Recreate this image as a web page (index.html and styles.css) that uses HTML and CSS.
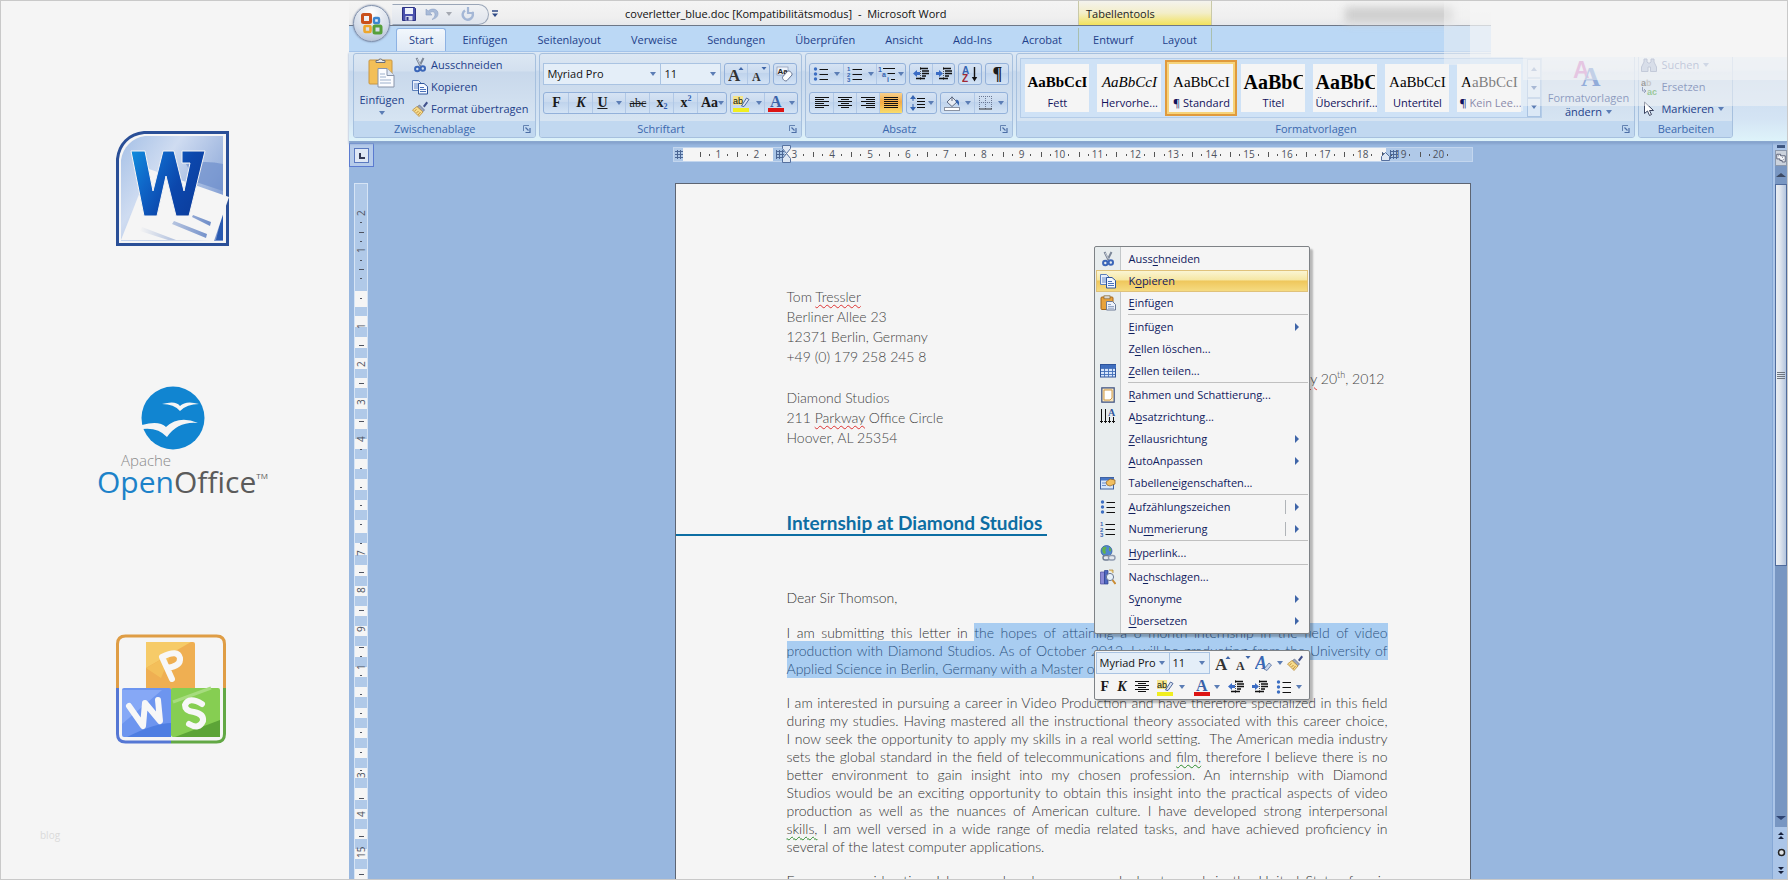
FILE: index.html
```html
<!DOCTYPE html>
<html lang="de">
<head>
<meta charset="utf-8">
<title>coverletter_blue.doc [Kompatibilitätsmodus] - Microsoft Word</title>
<link rel="stylesheet" href="styles.css">
</head>
<body>
<svg class="defs" width="0" height="0" aria-hidden="true">
  <defs>
    <symbol id="i-cut" viewBox="0 0 16 16"><path d="M4.500 1 8.500 9M11.500 1 7.500 9" stroke="#7c8798" stroke-width="2" fill="none"/><path d="M5.200 2 8.500 8" stroke="#dfe5ee" stroke-width=".7"/><circle cx="5.300" cy="12" r="2.200" fill="none" stroke="#3b66b8" stroke-width="2"/><circle cx="10.800" cy="11.500" r="2.200" fill="none" stroke="#3b66b8" stroke-width="2"/></symbol>
    <symbol id="i-copy" viewBox="0 0 16 16"><path d="M.5 1.500h6l3 3v7h-9z" fill="#e8effb" stroke="#5d80bb"/><path d="M2 5h5M2 7h4M2 9h4" stroke="#6a8cc8"/><path d="M6.500 4.500h5.500l3.500 3v7.500h-9z" fill="#f4f8ff" stroke="#2f569c"/><path d="M8 8.500h4M8 10.500h6M8 12.500h6" stroke="#4a72ba"/></symbol>
    <symbol id="i-brush" viewBox="0 0 16 16"><path d="M11 5l3.500-4.500 1.500 1.500-3.500 4.500z" fill="#40518c"/><path d="M7.500 4l5 5-2 2-5.500-5z" fill="#9aa4bb" stroke="#626c86" stroke-width=".7"/><path d="M5 5.500l6 5.500-4 4.500L.5 9z" fill="#f7dc8c" stroke="#b98e3c" stroke-width=".8"/><path d="M2.500 10l2-1.500M4.500 12l2-2M6 14l2.500-3" stroke="#b07b2c" stroke-width=".8"/></symbol>
    <symbol id="i-paste-lg" viewBox="0 0 28 32"><rect x="1" y="3" width="23" height="24" rx="1" fill="#f3bf57" stroke="#c99642"/><path d="M8 5.500h9v-2h-2.500a2.200 2.200 0 0 0-4.200 0H8z" fill="#e6e9ee" stroke="#6b6f78"/><path d="M10 11.500h9l7 7V30H10z" fill="#fbfcff" stroke="#8894aa"/><path d="M19 11.500v7h7" fill="#dfe7f4" stroke="#8894aa"/><path d="M12 17h5M12 20h6M12 23h11M12 26h11" stroke="#9db0cc"/></symbol>
    <symbol id="i-paste" viewBox="0 0 16 16"><rect x="1" y="2" width="12" height="12.500" rx="1" fill="#e8a33c" stroke="#a4661c"/><rect x="4" y=".8" width="6" height="3" fill="#d8d8d8" stroke="#8a6a30" stroke-width=".7"/><path d="M6.500 6.500h6l3 3v5.500h-9z" fill="#edf2fb" stroke="#6a7a96"/><path d="M8 9.500h3M8 11.500h6M8 13.200h6" stroke="#7a90b8" stroke-width=".8"/></symbol>
    <symbol id="i-save" viewBox="0 0 14 14"><path d="M.5.5h12l1 1v12H.5z" fill="#4a51ad" stroke="#2c3283"/><rect x="3" y="1" width="8" height="6" fill="#eef2fb"/><rect x="3.500" y="9" width="7" height="4.500" fill="#d7dcec"/><rect x="4.500" y="10" width="2" height="3.500" fill="#2c3283"/></symbol>
    <symbol id="i-undo" viewBox="0 0 14 14"><path d="M1 2v6h6L4.800 5.800C7 4 10 4.500 10 7.500c0 2-1 3.500-3 5 4-1 6-3 6-6C13 2 7 .5 3.200 4z" fill="#a9bbd8" stroke="#8ba0c4" stroke-width=".6"/></symbol>
    <symbol id="i-redo" viewBox="0 0 14 14"><path d="M4 3.500A5 5 0 1 0 11 5" fill="none" stroke="#a4b7d6" stroke-width="2.600"/><path d="M7 0v6h6" fill="none" stroke="#a4b7d6" stroke-width="2.200"/></symbol>
    <symbol id="i-clear" viewBox="0 0 18 18"><rect x="1" y="2" width="11" height="8" fill="#eef3fb" stroke="#7d8ba8" stroke-width=".6"/><text x="1.500" y="9" font-size="8" font-family="Liberation Sans" font-weight="700" fill="#222">Aa</text><path d="M6.500 12l5-5.500c1.500-1.500 5 1 4.500 3.500l-5 5.500c-2 1.500-5-1.500-4.500-3.500z" fill="#fff" stroke="#647493"/></symbol>
    <symbol id="i-bullets" viewBox="0 0 16 16"><g fill="#3d6fc2"><circle cx="2.500" cy="3" r="1.700"/><circle cx="2.500" cy="8" r="1.700"/><circle cx="2.500" cy="13" r="1.700"/></g><path d="M6.500 3.500H15M6.500 8.500H15M6.500 13.500H15" stroke="#111"/></symbol>
    <symbol id="i-numbers" viewBox="0 0 16 16"><g font-family="Liberation Sans" font-size="6" font-weight="700" fill="#3563b0"><text x="0" y="5">1</text><text x="0" y="10.500">2</text><text x="0" y="16">3</text></g><path d="M5.500 3.500H15M5.500 8.500H15M5.500 13.500H15" stroke="#111"/></symbol>
    <symbol id="i-multi" viewBox="0 0 18 16"><g font-family="Liberation Sans" font-size="7" font-weight="700" fill="#3563b0"><text x="0" y="6">1</text><text x="4" y="11">a</text><text x="9" y="16">i</text></g><path d="M5 2.500h12M9.500 7.500h7.500M13 13.500h4" stroke="#111"/></symbol>
    <symbol id="i-outdent" viewBox="0 0 16 16"><path d="M0 7.500l4-3.500v2h3v3H4v2z" fill="#3b6cc4"/><path d="M7 2.500h8M9 5h7M9 7.500h7M9 10h4M3 12.500h9" stroke="#111" stroke-width="1.400"/><path d="M7.500 1v14" stroke="#555" stroke-dasharray="1 1"/></symbol>
    <symbol id="i-indent" viewBox="0 0 16 16"><path d="M7 7.500L3 4v2H0v3h3v2z" fill="#3b6cc4"/><path d="M7 2.500h8M9 5h7M9 7.500h7M9 10h4M3 12.500h9" stroke="#111" stroke-width="1.400"/><path d="M7.500 1v14" stroke="#555" stroke-dasharray="1 1"/></symbol>
    <symbol id="i-sort" viewBox="0 0 16 16"><g font-family="Liberation Sans" font-weight="700" font-size="10"><text x="0" y="7.500" fill="#3563b0">A</text><text x="0" y="16" fill="#a02834">Z</text></g><path d="M12.500 1v12" stroke="#111" stroke-width="1.400"/><path d="M9.800 11h5.400l-2.700 4.500z" fill="#111"/></symbol>
    <symbol id="i-left" viewBox="0 0 14 12"><path d="M0 .5h14M0 2.500h9M0 4.500h14M0 6.500h9M0 8.500h14M0 10.500h9" stroke="#111"/></symbol>
    <symbol id="i-center" viewBox="0 0 14 12"><path d="M0 .5h14M3 2.500h8M0 4.500h14M3 6.500h8M0 8.500h14M3 10.500h8" stroke="#111"/></symbol>
    <symbol id="i-right" viewBox="0 0 14 12"><path d="M0 .5h14M5 2.500h9M0 4.500h14M5 6.500h9M0 8.500h14M5 10.500h9" stroke="#111"/></symbol>
    <symbol id="i-justify" viewBox="0 0 14 12"><path d="M0 .5h14M0 2.500h14M0 4.500h14M0 6.500h14M0 8.500h14M0 10.500h14" stroke="#111"/></symbol>
    <symbol id="i-spacing" viewBox="0 0 16 16"><path d="M3 0l3 4H0zM3 16l3-4H0z" fill="#3563b0"/><path d="M3 3v10" stroke="#3563b0" stroke-dasharray="3 3"/><path d="M7 3.500h8M7 6.500h8M7 9.500h8M7 12.500h8" stroke="#111"/></symbol>
    <symbol id="i-bucket" viewBox="0 0 16 16"><rect x=".5" y="12.500" width="15" height="3" fill="#fff" stroke="#8b93a3"/><path d="M3 7l5-5 5 5-5 4.500z" fill="#e9edf4" stroke="#5e6a82"/><path d="M8 6V1.500" stroke="#5e6a82"/><path d="M12.500 4.500c3 1 3 4 2 6.500-.5-2-1-3-3-4z" fill="#3563b0"/></symbol>
    <symbol id="i-border" viewBox="0 0 14 14"><path d="M.5 0v13M6.500 0v13M12.500 0v13M0 .5h13M0 6.500h13" stroke="#6a7894" stroke-dasharray="1 1"/><path d="M0 13h13" stroke="#333"/></symbol>
    <symbol id="i-stylesaa" viewBox="0 0 30 28"><g font-family="Liberation Sans" font-weight="700"><text x="0" y="19" font-size="23" fill="#b53aa6">A</text><text x="8" y="27" font-size="27" font-family="Liberation Serif" fill="#2f62bd">A</text></g></symbol>
    <symbol id="i-find" viewBox="0 0 16 14"><path d="M3 1h3v3l1 1h2l1-1V1h3v3l2.500 5v4.500h-6V9H7v4.500H.5V9L3 4z" fill="#7f97c4" stroke="#2e4782"/></symbol>
    <symbol id="i-replace" viewBox="0 0 16 16"><g font-family="Liberation Sans" font-weight="700" font-size="9"><text x="0" y="6.500" fill="#444">a</text><text x="5" y="6.500" fill="#999">b</text><text x="6" y="15.500" fill="#3e9a3c">ac</text></g><path d="M1.500 8v4h3M3 10l2 2-2 2" fill="none" stroke="#3c4f86"/></symbol>
    <symbol id="i-arrow" viewBox="0 0 12 16"><path d="M1.500 1v11.500L4.500 10l2 4.500 2-1-2-4h4z" fill="#fff" stroke="#3a4460"/></symbol>
    <symbol id="i-launch" viewBox="0 0 8 8"><path d="M.5 6V.5H6" fill="none" stroke="#6483b2"/><path d="M2.500 2.500l3 3M7 3v4.500H2.500" fill="none" stroke="#4c6ea6" stroke-width="1.200"/></symbol>
    <symbol id="i-table" viewBox="0 0 16 14"><rect x=".5" y=".5" width="15" height="12.500" fill="#d7e6fb" stroke="#2f559b"/><path d="M1 1h15v3H1z" fill="#3f6fc0"/><path d="M4.500 1v12M8.500 1v12M12.500 1v12M1 4.500h14M1 7.500h14M1 10.500h14" stroke="#426eb8" stroke-width=".9"/></symbol>
    <symbol id="i-sheet" viewBox="0 0 14 16"><path d="M.8.800h12.400v14.400H.8z" fill="#f6e4bd" stroke="#3d5283" stroke-width="1.200"/><path d="M3 3h8v8l-2 2H3z" fill="#fff" stroke="#d29a45"/></symbol>
    <symbol id="i-textdir" viewBox="0 0 16 16"><path d="M1.500 0v14M5.500 0v14M9.500 8v6M13.500 8v6M0 12.500h3M4 12.500h3M8 12.500h3M12 12.500h3" stroke="#111"/><text x="8" y="7" font-size="10" font-weight="700" font-family="Liberation Serif" fill="#2f559b">A</text></symbol>
    <symbol id="i-props" viewBox="0 0 16 14"><rect x=".5" y="1.500" width="13" height="11.500" fill="#d7e6fb" stroke="#3f62a2"/><path d="M1 2h13v2.500H1z" fill="#4676c6"/><path d="M2 7h4M2 9.500h4" stroke="#6b8cc8"/><path d="M6 6l4-3 5 1v4l-5 2-3-1z" fill="#f2bf60" stroke="#8b5e24" stroke-width=".7"/></symbol>
    <symbol id="i-link" viewBox="0 0 16 16"><circle cx="6.500" cy="6" r="5.500" fill="#4f87cf" stroke="#2d5a9c" stroke-width=".7"/><path d="M2.500 3c2-2 4-1 4 0s-2 2-1 3 0 3-1 3-3-3-2-6zM9 2c2 1 2.500 3 2 4s-2 0-2-1z" fill="#62b14e"/><rect x="3" y="10.500" width="6.500" height="4.500" rx="2.200" fill="#e4e8ee" stroke="#6f7c92" stroke-width="1.400"/><rect x="8.500" y="10.500" width="6.500" height="4.500" rx="2.200" fill="#e4e8ee" stroke="#8f9bb0" stroke-width="1.400"/></symbol>
    <symbol id="i-research" viewBox="0 0 16 16"><path d="M.5 3h4v12h-4z" fill="#8b8ad6" stroke="#4c4a9e" stroke-width=".7"/><path d="M4.500 1.500h3.500v13.500H4.500z" fill="#4e68c0" stroke="#2b3f8c" stroke-width=".7"/><path d="M9 1h4v3" fill="#f5d98f" stroke="#a77e2c" stroke-width=".7"/><circle cx="10" cy="8" r="3.600" fill="#e6f1fb" stroke="#6b7890"/><path d="M12.500 11l3 4" stroke="#c98b32" stroke-width="2"/></symbol>
    <symbol id="i-hl" viewBox="0 0 18 17"><rect x="0" y="1" width="10" height="9" fill="#f4e48a"/><text x="0" y="9" font-size="9" font-family="Liberation Sans" fill="#111">ab</text><path d="M8.500 11l5-8 2.500 1.500-5 7z" fill="#dfe6f2" stroke="#3f5a92" stroke-width=".9"/><rect x="0" y="13" width="16" height="4" fill="#f0ee20"/></symbol>
    <symbol id="i-color" viewBox="0 0 16 17"><text x="2" y="12" font-size="16" font-weight="700" font-family="Liberation Serif" fill="#3a62a8">A</text><rect x="0" y="13" width="16" height="4" fill="#dc1414"/></symbol>
    <symbol id="i-quick" viewBox="0 0 18 17"><text x="0" y="14" font-size="18" font-style="italic" font-weight="700" font-family="Liberation Serif" fill="#3a68b4">A</text><path d="M9 14l5-6 2.500 2-4.500 5.500z" fill="#c9d8ee" stroke="#3f5a92" stroke-width=".7"/></symbol>
    <symbol id="i-grow" viewBox="0 0 16 16"><text x="0" y="15" font-size="17" font-weight="700" font-family="Liberation Serif" fill="#333">A</text><path d="M10.500 4h5L13 1z" fill="#3f65a8"/></symbol>
    <symbol id="i-shrink" viewBox="0 0 16 16"><text x="1" y="15" font-size="12" font-weight="700" font-family="Liberation Serif" fill="#333">A</text><path d="M10.500 1h5L13 4z" fill="#3f65a8"/></symbol>
    <pattern id="hatch" width="3" height="3" patternUnits="userSpaceOnUse"><path d="M0 .5h3M.5 0v3" stroke="#4c6795"/></pattern>
  </defs>
</svg>

<div class="frame">
  <aside class="brands">
    <svg class="brand-word" width="114" height="116" viewBox="0 0 114 116" role="img" aria-label="Microsoft Word">
      <defs>
        <linearGradient id="w-bg" x1="0" y1="0" x2="1" y2=".7"><stop offset="0" stop-color="#a5c0e6"/><stop offset=".4" stop-color="#cfdcf1"/><stop offset=".8" stop-color="#9cb4de"/><stop offset="1" stop-color="#7793cd"/></linearGradient>
        <linearGradient id="w-letter" x1="0" y1="0" x2="1" y2=".5"><stop offset="0" stop-color="#0f8ddd"/><stop offset=".35" stop-color="#0f66c8"/><stop offset=".7" stop-color="#0c47ac"/><stop offset="1" stop-color="#0c3fa0"/></linearGradient>
        <linearGradient id="w-line" x1="0" y1="0" x2="1" y2="0"><stop offset="0" stop-color="#f4f4f4"/><stop offset="1" stop-color="#6d8cc8"/></linearGradient>
      </defs>
      <path d="M28 1.500h83.500v112H1.500V28C3 13 13 3 28 1.500z" fill="#f5f5f5" stroke="#2a4f97" stroke-width="3"/>
      <path d="M29 5h78v105H5V29C7 16 16 7 29 5z" fill="url(#w-bg)"/>
      <path d="M70 33q20-4 37 0v27l-27-9z" fill="#6e8fcc" opacity=".7"/>
      <path d="M107 80v29h-7z" fill="#2a5ab0"/>
      <path d="M5 109L33 38l80 28-15 44z" fill="#f5f5f5"/>
      <path d="M24 100l28 9h8l-34-13zM56 93l34 14 1-4-33-13zM76 86l18 9 1-4-18-7z" fill="url(#w-line)"/>
      <path d="M15 20h14l8 40 10-40h11l10 40 6-28h-8V20h23L73 85H60L50 45 41 85H28z" fill="url(#w-letter)" stroke="#f5f5f5"/>
    </svg>
    <div class="brand-oo">
      <svg width="64" height="64" viewBox="0 0 64 64" aria-hidden="true"><circle cx="32" cy="32" r="31.500" fill="#1185d1"/><path d="M21 18q14-4 18 2 6-6 19-2-12 0-19 7-6-7-18-7z" fill="#f5f5f5"/><path d="M1 39q17-5 24 2 13-12 32-4-20-2-31 14-9-10-25-8z" fill="#f5f5f5"/></svg>
      <p class="brand-oo-top">Apache</p>
      <p class="brand-oo-name"><span class="brand-oo-open">Open</span>Office<sup>TM</sup></p>
    </div>
    <svg class="brand-wps" width="112" height="112" viewBox="0 0 112 112" role="img" aria-label="WPS">
      <path d="M2.500 54V10q0-8 8-8h91q8 0 8 8v44" fill="none" stroke="#df9d45" stroke-width="3"/>
      <path d="M2.500 54v46q0 8 8 8H56" fill="none" stroke="#5577d4" stroke-width="3"/>
      <path d="M56 108h45.500q8 0 8-8V54" fill="none" stroke="#62a845" stroke-width="3"/>
      <rect x="31" y="8" width="49" height="49" rx="2" fill="#efaf52"/><path d="M31 8h45L31 34z" fill="#f6cb68"/><path d="M31 34l25-14-10 24z" fill="#f3bf5a"/>
      <rect x="7" y="54" width="49" height="49" rx="2" fill="#6d95ef"/><path d="M7 90V56h40z" fill="#86a8f6"/><path d="M12 103q28-14 44-14v14z" fill="#4e7ee2"/>
      <rect x="56" y="54" width="49" height="49" rx="2" fill="#86ce52"/><path d="M60 103l45-17v17z" fill="#5ca437"/><path d="M58 68l38-14" stroke="#a6dc7e" stroke-width="3"/>
      <g fill="none" stroke="#f7f7f7" stroke-width="6" stroke-linecap="round" stroke-linejoin="round"><path d="M57 45L47 23q16-8 18 1 1 8-13 10"/><path d="M14 72l14 20 2-23 15 18-2-21"/><path d="M87 70q-13-8-17 1 0 6 9 7 10 2 9 9-4 9-14 3"/></g>
    </svg>
    <p class="watermark">blog</p>
  </aside>

  <main class="word">
    <header class="titlebar">
      <button class="orb" aria-label="Office-Schaltfläche">
        <svg width="24" height="24" viewBox="0 0 24 24"><g fill="none" stroke-width="3"><rect x="2.500" y="2.500" width="8" height="8" rx="1" stroke="#c9501c"/><rect x="14" y="6" width="5" height="5" rx="1" stroke="#3c86cf" stroke-width="2.400"/><rect x="4.500" y="14" width="6" height="6" rx="1" stroke="#eea62c" stroke-width="2.600"/><rect x="14" y="14" width="7" height="7" rx="1" stroke="#56a03a"/></g></svg>
      </button>
      <div class="qat">
        <button class="plain" aria-label="Speichern"><svg width="14" height="14"><use href="#i-save"/></svg></button>
        <button class="plain qat-undo" aria-label="Rückgängig"><svg width="14" height="14"><use href="#i-undo"/></svg><i class="tri tri-dim"></i></button>
        <button class="plain" aria-label="Wiederholen"><svg width="14" height="14"><use href="#i-redo"/></svg></button>
      </div>
      <button class="plain qat-more" aria-label="Anpassen"><svg width="8" height="8" viewBox="0 0 8 8"><path d="M1 1h6" stroke="#2f4a86" stroke-width="1.500"/><path d="M1 3.500h6L4 7z" fill="#2f4a86"/></svg></button>
      <h1 class="title">coverletter_blue.doc [Kompatibilitätsmodus]&nbsp; - &nbsp;Microsoft Word</h1>
      <span class="ghost"></span>
    </header>

    <nav class="tabs">
      <button class="tab tab-on">Start</button>
      <button class="tab">Einfügen</button>
      <button class="tab">Seitenlayout</button>
      <button class="tab">Verweise</button>
      <button class="tab">Sendungen</button>
      <button class="tab">Überprüfen</button>
      <button class="tab">Ansicht</button>
      <button class="tab">Add-Ins</button>
      <button class="tab">Acrobat</button>
      <div class="context-tabs">
        <span class="context-title">Tabellentools</span>
        <button class="tab">Entwurf</button>
        <button class="tab">Layout</button>
      </div>
    </nav>

    <section class="ribbon">
      <div class="group">
        <div class="group-body">
          <button class="big"><svg width="28" height="32"><use href="#i-paste-lg"/></svg>Einfügen<i class="tri"></i></button>
          <div class="stack">
            <button class="cmd"><svg width="16" height="16"><use href="#i-cut"/></svg>Ausschneiden</button>
            <button class="cmd"><svg width="16" height="16"><use href="#i-copy"/></svg>Kopieren</button>
            <button class="cmd"><svg width="16" height="16"><use href="#i-brush"/></svg>Format übertragen</button>
          </div>
        </div>
        <div class="group-label">Zwischenablage<button class="launch" aria-label="Zwischenablage öffnen"><svg width="8" height="8"><use href="#i-launch"/></svg></button></div>
      </div>

      <div class="group">
        <div class="group-body group-rows">
          <div class="row">
            <div class="combos">
              <span class="combo combo-font"><select aria-label="Schriftart"><option>Myriad Pro</option></select><i class="tri"></i></span>
              <span class="combo combo-size"><select aria-label="Schriftgrad"><option>11</option></select><i class="tri"></i></span>
            </div>
            <div class="set"><button aria-label="Vergrößern"><svg width="16" height="16"><use href="#i-grow"/></svg></button><button aria-label="Verkleinern"><svg width="16" height="16"><use href="#i-shrink"/></svg></button></div>
            <div class="set"><button aria-label="Formatierung löschen"><svg width="18" height="18"><use href="#i-clear"/></svg></button></div>
          </div>
          <div class="row">
            <div class="set set-font">
              <button class="glyph">F</button><button class="glyph it">K</button><button class="glyph wide"><u>U</u><i class="tri"></i></button><button class="glyph strike">abc</button><button class="glyph">x<sub>2</sub></button><button class="glyph">x<sup>2</sup></button><button class="glyph mid">Aa<i class="tri"></i></button>
            </div>
            <div class="set"><button class="wide" aria-label="Hervorheben"><svg width="18" height="17"><use href="#i-hl"/></svg><i class="tri"></i></button><button class="wide" aria-label="Schriftfarbe"><svg width="16" height="17"><use href="#i-color"/></svg><i class="tri"></i></button></div>
          </div>
        </div>
        <div class="group-label">Schriftart<button class="launch" aria-label="Schriftart öffnen"><svg width="8" height="8"><use href="#i-launch"/></svg></button></div>
      </div>

      <div class="group">
        <div class="group-body group-rows">
          <div class="row">
            <div class="set"><button class="wide" aria-label="Aufzählung"><svg width="16" height="16"><use href="#i-bullets"/></svg><i class="tri"></i></button><button class="wide" aria-label="Nummerierung"><svg width="16" height="16"><use href="#i-numbers"/></svg><i class="tri"></i></button><button class="mid" aria-label="Liste"><svg width="18" height="16"><use href="#i-multi"/></svg><i class="tri"></i></button></div>
            <div class="set"><button aria-label="Einzug verkleinern"><svg width="16" height="16"><use href="#i-outdent"/></svg></button><button aria-label="Einzug vergrößern"><svg width="16" height="16"><use href="#i-indent"/></svg></button></div>
            <div class="set"><button aria-label="Sortieren"><svg width="16" height="16"><use href="#i-sort"/></svg></button></div>
            <div class="set"><button class="glyph pilcrow">¶</button></div>
          </div>
          <div class="row">
            <div class="set set-align"><button aria-label="Links"><svg width="14" height="12"><use href="#i-left"/></svg></button><button aria-label="Zentriert"><svg width="14" height="12"><use href="#i-center"/></svg></button><button aria-label="Rechts"><svg width="14" height="12"><use href="#i-right"/></svg></button><button class="pressed" aria-label="Blocksatz"><svg width="14" height="12"><use href="#i-justify"/></svg></button></div>
            <div class="set"><button class="mid" aria-label="Zeilenabstand"><svg width="16" height="16"><use href="#i-spacing"/></svg><i class="tri"></i></button></div>
            <div class="set"><button class="wide" aria-label="Schattierung"><svg width="16" height="16"><use href="#i-bucket"/></svg><i class="tri"></i></button><button class="wide" aria-label="Rahmen"><svg width="14" height="14"><use href="#i-border"/></svg><i class="tri"></i></button></div>
          </div>
        </div>
        <div class="group-label">Absatz<button class="launch" aria-label="Absatz öffnen"><svg width="8" height="8"><use href="#i-launch"/></svg></button></div>
      </div>

      <div class="group">
        <div class="group-body group-styles">
          <div class="gallery">
            <button class="style"><span class="sample bold">AaBbCcI</span>Fett</button>
            <button class="style"><span class="sample ital">AaBbCcI</span>Hervorhe...</button>
            <button class="style style-on"><span class="sample">AaBbCcI</span>¶ Standard</button>
            <button class="style"><span class="sample large">AaBbC</span>Titel</button>
            <button class="style"><span class="sample large">AaBbC</span>Überschrif...</button>
            <button class="style"><span class="sample">AaBbCcI</span>Untertitel</button>
            <button class="style"><span class="sample">AaBbCcI</span>¶ Kein Lee...</button>
            <div class="gallery-nav">
              <button aria-label="Nach oben"><i class="tri tri-up"></i></button>
              <button aria-label="Nach unten"><i class="tri"></i></button>
              <button aria-label="Mehr"><i class="tri tri-more"></i></button>
            </div>
          </div>
          <button class="big big-styles"><svg width="30" height="28"><use href="#i-stylesaa"/></svg><span>Formatvorlagen</span><span class="inline">ändern <i class="tri"></i></span></button>
        </div>
        <div class="group-label">Formatvorlagen<button class="launch" aria-label="Formatvorlagen öffnen"><svg width="8" height="8"><use href="#i-launch"/></svg></button></div>
      </div>

      <div class="group group-edit">
        <div class="group-body">
          <div class="stack">
            <button class="cmd"><svg width="16" height="14"><use href="#i-find"/></svg>Suchen <i class="tri"></i></button>
            <button class="cmd"><svg width="16" height="16"><use href="#i-replace"/></svg>Ersetzen</button>
            <button class="cmd"><svg width="16" height="16"><use href="#i-arrow"/></svg>Markieren <i class="tri"></i></button>
          </div>
        </div>
        <div class="group-label">Bearbeiten</div>
      </div>
    </section>

    <svg class="fade" width="343" height="110" viewBox="0 0 343 110" aria-hidden="true" fill="#f5f5f5">
      <rect x="0" y="0" width="26" height="64" opacity=".45"/>
      <rect x="26" y="0" width="21" height="56" opacity=".75"/>
      <rect x="47" y="0" width="296" height="56"/>
      <rect x="26" y="56" width="53" height="54" opacity=".5"/>
      <rect x="79" y="56" width="264" height="23" opacity=".75"/>
      <rect x="79" y="79" width="264" height="26" opacity=".5"/>
    </svg>

    <section class="work">
      <div class="rail">
        <button class="tabstop" aria-label="Tabstopp"><svg width="15" height="15" viewBox="0 0 15 15"><rect x=".5" y=".5" width="14" height="14" fill="#dfe8f5" stroke="#5b7ac0"/><path d="M6 5v5h5" fill="none" stroke="#333a55" stroke-width="2"/></svg></button>
        <svg class="vruler" width="14" height="697" viewBox="0 0 14 697" aria-hidden="true">
          <rect width="14" height="697" fill="#d6e4f5"/><rect x="1" y="1" width="12" height="695" fill="#b0c9e8"/>
          <path fill="#f5f5f5" d="M1 108h12v16H1zM1 133h12v11H1zM1 154h12v11H1zM1 175h12v11H1zM1 195h12v10H1zM1 215h12v11H1zM1 236h12v10H1zM1 256h12v10H1zM1 276h12v10H1zM1 296h12v11H1zM1 317h12v10H1zM1 337h12v13H1zM1 360h12v12H1zM1 382h12v11H1zM1 403h12v10H1zM1 423h12v10H1zM1 443h12v10H1zM1 463h12v11H1zM1 484h12v10H1zM1 504h12v10H1zM1 525h12v10H1zM1 545h12v10H1zM1 565h12v10H1zM1 585h12v10H1zM1 605h12v12H1zM1 626h12v10H1zM1 646h12v10H1zM1 666h12v10H1zM1 686h12v10H1z"/>
          <path stroke="#4e5360" fill="none" d="M6 39.500h2M5 49.500h5M6 58.500h2M6 77.500h2M5 86.500h5M6 95.500h2M6 115.500h2M5 162.500h5M5 200.500h5M5 238.500h5M6 266.500h2M6 285.500h2M6 304.500h2M6 322.500h2M6 341.500h2M6 360.500h2M5 389.500h5M5 427.500h5M5 464.500h5M6 473.500h2M6 492.500h2M6 511.500h2M6 530.500h2M6 549.500h2M6 569.500h2M6 587.500h2M5 615.500h5M5 653.500h5M5 691.500h5"/>
          <g class="vnum"><text transform="translate(11 33) rotate(-90)">2</text><text transform="translate(11 70) rotate(-90)">1</text><text transform="translate(11 146) rotate(-90)">1</text><text transform="translate(11 184) rotate(-90)">2</text><text transform="translate(11 222) rotate(-90)">3</text><text transform="translate(11 259) rotate(-90)">4</text><text transform="translate(11 373) rotate(-90)">7</text><text transform="translate(11 410) rotate(-90)">8</text><text transform="translate(11 449) rotate(-90)">9</text><text transform="translate(11 487) rotate(-90)">1</text><text transform="translate(11 595) rotate(-90)">3</text><text transform="translate(11 634) rotate(-90)">4</text><text transform="translate(11 675) rotate(-90)">15</text></g>
        </svg>
      </div>

      <div class="desk">
        <div class="hruler">
          <ol class="scale">
            <li>1</li><li>2</li><li>3</li><li>4</li><li>5</li><li>6</li><li>7</li><li>8</li><li>9</li><li>10</li><li>11</li><li>12</li><li>13</li><li>14</li><li>15</li><li>16</li><li>17</li><li>18</li><li>19</li><li>20</li>
          </ol>
          <svg class="mark mark-start" width="9" height="13" aria-hidden="true"><rect width="9" height="13" fill="#b0c9e8"/><rect x="1" y="2" width="8" height="9" fill="url(#hatch)"/></svg>
          <svg class="mark mark-left" width="22" height="18" viewBox="0 0 22 18" aria-hidden="true"><rect y="3" width="12" height="13" fill="#a8c4e6"/><rect x="3" y="5" width="8" height="9" fill="url(#hatch)"/><path d="M9.500.5h8v3l-4 5 4 5v4h-8v-4l4-5-4-5z" fill="#dfe8f4" stroke="#56709e"/></svg>
          <svg class="mark mark-right" width="17" height="13" viewBox="0 0 17 13" aria-hidden="true"><path d="M1 4l4 4" stroke="#56709e"/><rect x="9" y="2" width="8" height="9" fill="url(#hatch)"/><path d="M.5 12.500v-4l4-4 4 4v4z" fill="#dfe8f4" stroke="#56709e"/></svg>
        </div>

        <article class="page">
          <div class="letterhead">
            <div>
              <p>Tom <span class="typo">Tressler</span></p>
              <p>Berliner Allee 23</p>
              <p>12371 Berlin, Germany</p>
              <p>+49 (0) 179 258 245 8</p>
              <address>Diamond Studios<br>211 <span class="typo">Parkway</span> Office Circle<br>Hoover, AL 25354</address>
            </div>
            <p class="date"><span class="typo">July</span> 20<sup>th</sup>, 2012</p>
          </div>
          <h2 class="subject">Internship at Diamond Studios</h2>
          <p class="salute">Dear Sir Thomson,</p>
          <p class="para">
            <span class="line">I am submitting this letter in <mark>the hopes of attaining a 6 month internship in the field of video</mark></span>
            <span class="line"><mark>production with Diamond Studios. As of October 2012, I will be graduating from the University of</mark></span>
            <span class="line line-last"><mark>Applied Science in Berlin, Germany with a Master of Arts degree.</mark></span>
          </p>
          <p class="para">
            <span class="line">I am interested in pursuing a career in Video Production and have therefore specialized in this field</span>
            <span class="line">during my studies. Having mastered all the instructional theory associated with this career choice,</span>
            <span class="line">I now seek the opportunity to apply my skills in a real world setting. &nbsp;The American media industry</span>
            <span class="line">sets the global standard in the field of telecommunications and <span class="grammar">film,</span> therefore I believe there is no</span>
            <span class="line">better environment to gain insight into my chosen profession. An internship with Diamond</span>
            <span class="line">Studios would be an exciting opportunity to obtain this insight into the practical aspects of video</span>
            <span class="line">production as well as the nuances of American culture. I have developed strong interpersonal</span>
            <span class="line"><span class="grammar">skills,</span> I am well versed in a wide range of media related tasks, and have achieved proficiency in</span>
            <span class="line line-last">several of the latest computer applications.</span>
          </p>
          <p class="para">
            <span class="line">For your consideration, I have enclosed my resume. I plan to work in the United States for six</span>
          </p>

          <div class="popup menu" role="menu">
            <button role="menuitem"><svg width="16" height="16"><use href="#i-cut"/></svg><span>Auss<u>c</u>hneiden</span></button>
            <button role="menuitem" class="hot"><svg width="16" height="16"><use href="#i-copy"/></svg><span>K<u>o</u>pieren</span></button>
            <button role="menuitem"><svg width="16" height="16"><use href="#i-paste"/></svg><span><u>E</u>infügen</span></button>
            <hr>
            <button role="menuitem" class="sub"><span><u>E</u>infügen</span></button>
            <button role="menuitem"><span>Z<u>e</u>llen löschen...</span></button>
            <button role="menuitem"><svg width="16" height="14"><use href="#i-table"/></svg><span><u>Z</u>ellen teilen...</span></button>
            <hr>
            <button role="menuitem"><svg width="14" height="16"><use href="#i-sheet"/></svg><span><u>R</u>ahmen und Schattierung...</span></button>
            <button role="menuitem"><svg width="16" height="16"><use href="#i-textdir"/></svg><span>A<u>b</u>satzrichtung...</span></button>
            <button role="menuitem" class="sub"><span><u>Z</u>ellausrichtung</span></button>
            <button role="menuitem" class="sub"><span><u>A</u>utoAnpassen</span></button>
            <button role="menuitem"><svg width="16" height="14"><use href="#i-props"/></svg><span>Tabellen<u>e</u>igenschaften...</span></button>
            <hr>
            <button role="menuitem" class="sub split"><svg width="16" height="16"><use href="#i-bullets"/></svg><span><u>A</u>ufzählungszeichen</span></button>
            <button role="menuitem" class="sub split"><svg width="16" height="16"><use href="#i-numbers"/></svg><span>Nu<u>m</u>merierung</span></button>
            <hr>
            <button role="menuitem"><svg width="16" height="16"><use href="#i-link"/></svg><span><u>H</u>yperlink...</span></button>
            <hr>
            <button role="menuitem"><svg width="16" height="16"><use href="#i-research"/></svg><span>Na<u>c</u>hschlagen...</span></button>
            <button role="menuitem" class="sub"><span>S<u>y</u>nonyme</span></button>
            <button role="menuitem" class="sub"><span><u>Ü</u>bersetzen</span></button>
          </div>

          <div class="popup mini">
            <div class="mini-row">
              <span class="combo mini-font"><select aria-label="Schriftart"><option>Myriad Pro</option></select><i class="tri"></i></span>
              <span class="combo mini-size"><select aria-label="Schriftgrad"><option>11</option></select><i class="tri"></i></span>
              <div class="mini-tools">
                <button aria-label="Vergrößern"><svg width="16" height="16"><use href="#i-grow"/></svg></button>
                <button aria-label="Verkleinern"><svg width="16" height="16"><use href="#i-shrink"/></svg></button>
                <button aria-label="Formatvorlage"><svg width="18" height="17"><use href="#i-quick"/></svg><i class="tri"></i></button>
                <button aria-label="Format übertragen"><svg width="16" height="16"><use href="#i-brush"/></svg></button>
              </div>
            </div>
            <div class="mini-row mini-tools">
              <button class="glyph">F</button>
              <button class="glyph it">K</button>
              <button aria-label="Zentriert"><svg width="14" height="12"><use href="#i-center"/></svg></button>
              <button aria-label="Hervorheben"><svg width="18" height="17"><use href="#i-hl"/></svg><i class="tri"></i></button>
              <button aria-label="Schriftfarbe"><svg width="16" height="17"><use href="#i-color"/></svg><i class="tri"></i></button>
              <button aria-label="Einzug verkleinern"><svg width="16" height="16"><use href="#i-outdent"/></svg></button>
              <button aria-label="Einzug vergrößern"><svg width="16" height="16"><use href="#i-indent"/></svg></button>
              <button aria-label="Aufzählung"><svg width="16" height="16"><use href="#i-bullets"/></svg><i class="tri"></i></button>
            </div>
          </div>
        </article>
      </div>

      <div class="scroll">
        <button class="split-handle" aria-label="Teilen"></button>
        <button class="ruler-toggle" aria-label="Lineal"><svg width="10" height="11" viewBox="0 0 13 13"><path d="M1 1h5v2h6v8H8V9H5V7H1z" fill="#f4f6fa" stroke="#39415c"/><path d="M3 3h1M8 5h1M9 8h1" stroke="#39415c"/></svg></button>
        <div class="track">
          <button class="plain" aria-label="Nach oben"><i class="tri tri-up"></i></button>
          <div class="thumb"><i></i></div>
          <div class="track-rest"></div>
          <button class="plain" aria-label="Nach unten"><i class="tri"></i></button>
        </div>
        <button class="plain jump" aria-label="Vorherige Seite"><svg width="8" height="8" viewBox="0 0 8 8"><path d="M4 0l3 3H1zM4 4l3 3H1z" fill="#16203c"/></svg></button>
        <button class="plain jump" aria-label="Browseobjekt"><svg width="9" height="9" viewBox="0 0 9 9"><circle cx="4.500" cy="4.500" r="3" fill="#dfe3e6" stroke="#222" stroke-width="1.500"/></svg></button>
        <button class="plain jump" aria-label="Nächste Seite"><svg width="8" height="8" viewBox="0 0 8 8"><path d="M4 4l3-3H1zM4 8l3-3H1z" fill="#16203c"/></svg></button>
      </div>
    </section>
  </main>
</div>
</body>
</html>
```
FILE: styles.css
```css
:root {
  --ui: "Open Sans", "Noto Sans", sans-serif;
  --doc: Lato, "Open Sans", sans-serif;
  --ink: #1e3f8a;
  --menu-ink: #10205e;
  --paper: #f5f5f5;
  --desk: #98b7df;
}

* { box-sizing: border-box; }
body { margin: 0; font: 11px/14px var(--ui); color: #111; background: var(--paper); }
p, h1, h2, ol, hr, address { margin: 0; padding: 0; font-style: normal; }
svg { display: block; flex: none; }
button { margin: 0; padding: 0; border: 0; background: none; font: inherit; color: inherit; }
button, select { cursor: default; }
.defs { position: absolute; }

.frame {
  display: grid;
  grid-template-columns: 348px minmax(0, 1fr);
  grid-template-rows: minmax(0, 1fr);
  height: 100vh;
  border: 1px solid #c9c9c9;
  overflow: hidden;
}

/* Left column with the product logos */
.brands { display: flex; flex-direction: column; align-items: flex-start; padding: 130px 0 0 39px; }
.brand-word { margin-left: 76px; }
.brand-oo { width: 176px; margin: 139px 0 0 57px; }
.brand-oo svg { margin-left: 44px; }
.brand-oo-top { margin-left: 24px; font-size: 15px; line-height: 20px; font-weight: 300; color: #8a8a8a; }
.brand-oo-name { font-size: 30px; line-height: 24px; color: #5b5b5b; white-space: nowrap; }
.brand-oo-open { color: #1c82c9; }
.brand-oo-name sup { font-size: 8px; line-height: 8px; vertical-align: 14px; }
.brand-wps { margin: 140px 0 0 75px; }
.watermark { margin-top: 82px; font-size: 10px; color: #dadada; }

/* Window */
.word { position: relative; display: grid; grid-template-rows: 25px 25px 91px minmax(0, 1fr); }

.titlebar {
  position: relative;
  display: flex;
  align-items: center;
  padding: 2px 0 0 43px;
  background: linear-gradient(#f4f4f4, #efefef 70%, #e6e8eb);
  border-bottom: 1px solid #6d7787;
}
.orb {
  position: absolute; left: 4px; top: 4px; z-index: 3;
  width: 37px; height: 37px;
  display: grid; place-items: center;
  border: 1px solid #8090ac; border-radius: 50%;
  background: radial-gradient(circle at 50% 20%, #fff, #d3dbe8 60%, #a9b8d0);
  box-shadow: 0 0 2px #6a7a98;
}
.plain { display: flex; align-items: center; justify-content: center; }
.qat {
  display: flex; align-items: center; gap: 9px;
  height: 21px; padding: 0 13px 0 9px;
  border: 1px solid #9aa6b8; border-left-color: transparent; border-radius: 0 11px 11px 0;
  background: linear-gradient(#f0f2f5, #dfe4ec);
}
.qat-undo { gap: 7px; }
.qat-more { margin-left: 2px; }
.title { margin-left: 126px; font-size: 11px; font-weight: 400; white-space: nowrap; }
.ghost { position: absolute; right: 334px; top: 6px; width: 108px; height: 16px; background: #cfcfcf; filter: blur(4px); }

.tri { width: 0; height: 0; border: 3px solid transparent; border-top: 4px solid #5b7db5; border-bottom: 0; }
.tri-dim { border-top-color: #a5a9b2; }
.tri-up { border-top: 0; border-bottom: 4px solid #5b7db5; }

.tabs {
  display: flex; align-items: stretch; gap: 2px;
  padding: 2px 0 0 47px;
  background: #bbd8f5;
  color: var(--ink);
}
.tab { padding: 0 14px; white-space: nowrap; }
.tab-on {
  padding: 0 12px;
  border: 1px solid #8db2e3; border-bottom: 0; border-radius: 3px 3px 0 0;
  background: linear-gradient(#f2f7fc, #dfe9f5);
}
.context-tabs { position: relative; display: flex; gap: 1px; border: solid #a9bfae; border-width: 0 1px; }
.context-title {
  position: absolute; left: -1px; right: -1px; bottom: 100%; height: 24px;
  padding: 6px 7px 0; margin-bottom: 3px;
  background: linear-gradient(#f4f3ee, #f3eec8 50%, #f2e25c);
  border: solid #c9c9a8; border-width: 0 1px;
  color: #222;
}

.ribbon {
  display: flex; gap: 3px;
  padding: 1px 4px 3px;
  border-top: 1px solid #a3c3ea;
  border-bottom: 1px solid #89a7cf;
  background: linear-gradient(#dbe7f4, #d4e2f2 20%, #c8d9ed 22%, #d4e4f4 75%, #def3fa);
  box-shadow: 0 2px 2px #86a3cd;
  color: var(--ink);
  z-index: 1;
}
.group {
  display: flex; flex-direction: column;
  border: 1px solid #a6c0de; border-radius: 3px;
  background: linear-gradient(#dce7f3, #d3e0ef 20%, #c8d8eb 22%, #d6e4f2 80%);
  overflow: hidden;
}
.group-body { flex: 1; display: flex; }
.group-rows { flex-direction: column; gap: 7px; padding: 9px 3px 0; }
.row { display: flex; gap: 3px; }
.group-label {
  position: relative;
  height: 16px; line-height: 16px; padding-right: 20px;
  text-align: center; color: #3c68ae; background: #c1d8f0;
}
.launch { position: absolute; right: 4px; top: 4px; }

.big { display: flex; flex-direction: column; align-items: center; width: 56px; padding-top: 3px; }
.big svg { margin-bottom: 4px; }
.big .tri { margin-top: 4px; }
.big-styles { width: 92px; padding-top: 1px; }
.inline { display: flex; align-items: center; gap: 4px; }
.big .inline .tri { margin-top: 0; }
.stack { display: flex; flex-direction: column; padding: 0 7px 0 2px; }
.cmd { display: flex; align-items: center; gap: 3px; height: 22px; white-space: nowrap; }

.combos { display: flex; }
.combo { position: relative; display: flex; height: 22px; border: 1px solid #a9c3e2; background: #e4eef8; }
.combo + .combo { border-left: 0; }
.combo select { width: 100%; padding: 0 3px; border: 0; appearance: none; background: none; font: inherit; color: #111; }
.combo .tri { position: absolute; right: 4px; top: 8px; }
.combo-font { width: 118px; }
.combo-size { width: 60px; }

.set { display: flex; height: 22px; border: 1px solid #93b1da; border-radius: 3px; background: linear-gradient(#d6e3f3, #c9daef 45%, #bfd3ec 46%, #d3e3f5); }
.set button { display: flex; align-items: center; justify-content: center; gap: 3px; width: 22px; }
.set button + button { border-left: 1px solid #b1c8e6; }
.set .wide { width: 33px; gap: 5px; }
.set .mid { width: 29px; gap: 2px; }
.set-font button { width: 24px; }
.set-align button { width: 23px; }
.pressed { background: linear-gradient(#f7d08c, #f3ab45 45%, #f9dd6c); }
.glyph { font: 700 14px/16px "Liberation Serif", serif; color: #1a1a1a; }
.glyph.it { font-style: italic; }
.glyph.strike { font-size: 12px; font-weight: 400; text-decoration: line-through; }
.set .glyph { gap: 0; }
.set .glyph.wide { gap: 8px; }
.glyph sub, .glyph sup { font-size: 8px; line-height: 8px; color: #2f5db0; align-self: flex-end; }
.glyph sup { align-self: flex-start; margin-top: 2px; }
.glyph sub { margin-bottom: 2px; }
.set .pilcrow { font-size: 18px; }

.group-styles { padding: 4px 0 0 3px; }
.gallery { display: flex; align-items: center; height: 60px; border: 1px solid #b4cce8; background: #cfe2f6; padding-left: 4px; gap: 8px; }
.style {
  width: 64px; height: 48px; padding: 6px 2px 0; overflow: hidden;
  background: var(--paper); color: #12125c; white-space: nowrap;
}
.style-on { box-shadow: 0 0 0 2px #f6d37a, 0 0 0 4px #e09a3c; }
.sample { display: block; height: 20px; margin-bottom: 4px; overflow: hidden; font: 15px/20px "Liberation Serif", serif; color: #000; }
.sample.bold { font-weight: 700; }
.sample.ital { font-style: italic; }
.sample.large { font-size: 20px; font-weight: 700; }
.gallery-nav { display: flex; flex-direction: column; align-self: stretch; width: 14px; margin-left: -2px; }
.gallery-nav button { flex: 1; display: grid; place-items: center; border: 1px solid #a9c3e2; background: #dbe8f6; }
.tri-more { box-shadow: 0 -6px 0 -2px #5b7db5; }
.group-edit { width: 95px; }
.group-edit .group-label { padding-right: 0; }
.group-edit .cmd { gap: 4px; }
.fade { position: absolute; right: 0; top: 0; z-index: 2; pointer-events: none; }

/* Workspace */
.work { display: grid; grid-template-columns: 24px minmax(0, 1fr) 15px; grid-template-rows: minmax(0, 1fr); background: var(--desk); min-height: 0; overflow: hidden; }
.rail { padding-top: 1px; }
.tabstop { display: grid; place-items: center; width: 25px; height: 24px; border: 1px solid #5b7bd0; background: #b5cbea; }
.vruler { margin: 16px 0 0 5px; }
.vnum { font: 10px var(--ui); fill: #4e5360; }

.desk { display: flex; flex-direction: column; align-items: center; padding-top: 6px; }
.hruler {
  flex: none;
  position: relative;
  width: 100%; max-width: 798px; height: 13px; margin-bottom: 22px;
  padding: 0 14px 0 26px;
  background: linear-gradient(90deg, var(--paper) 712px, #b0c9e8 712px);
  outline: 1px solid #c3d6ee;
}
.scale { display: grid; grid-template-columns: repeat(20, 1fr); list-style: none; }
.scale li {
  text-align: center; font-size: 10px; line-height: 13px; color: #4e5360;
  background:
    linear-gradient(#555, #555) 0 4px / 1px 5px no-repeat,
    linear-gradient(#555, #555) 25% 6px / 1px 2px no-repeat,
    linear-gradient(#555, #555) 75% 6px / 1px 2px no-repeat;
}
.mark { position: absolute; top: 0; }
.mark-start { left: 0; }
.mark-left { left: 99px; top: -3px; }
.mark-right { left: 707px; }

.page {
  flex: none;
  position: relative;
  width: 100%; max-width: 796px; min-height: 1123px;
  padding: 103px 82px 0 111px;
  background: var(--paper);
  border: 1px solid #5d6573;
  font-family: var(--doc);
  color: #333;
}
.letterhead { display: flex; justify-content: space-between; font-size: 14px; line-height: 20px; font-weight: 300; color: #444; }
.letterhead address { margin-top: 21px; }
.date { align-self: center; margin-top: 22px; padding-right: 3px; }
.date sup { font-size: 9px; line-height: 9px; }
.typo { text-decoration: underline wavy #d33 1px; text-underline-offset: 2px; }
.grammar { text-decoration: underline wavy #2c8a2c 1px; text-underline-offset: 2px; }
.subject {
  width: fit-content; margin: 64px 0 0 -111px; padding: 0 5px 0 111px;
  border-bottom: 2px solid #0d6ea3;
  font-size: 19px; line-height: 22px; font-weight: 700; color: #0d6ea3;
}
.salute { margin: 53px 0 17px; font-size: 14px; line-height: 18px; font-weight: 300; }
.para { margin-bottom: 16px; font-size: 14px; line-height: 18px; font-weight: 300; }
.line { display: block; white-space: nowrap; text-align: justify; text-align-last: justify; }
.line-last { text-align-last: left; }
mark { padding: 1px 0; background: #a9cdf1; color: #2c527f; }

/* Floating context menu and mini toolbar */
.popup { position: absolute; left: 418px; width: 216px; border: 1px solid #7e8286; border-radius: 2px; background: var(--paper); box-shadow: 3px 3px 2px #00000040; font-family: var(--ui); color: var(--menu-ink); }
.menu { top: 62px; padding: 1px; background: linear-gradient(90deg, #e8edee 25px, #c3c7c9 25px, #c3c7c9 26px, var(--paper) 26px); }
.menu button { display: grid; grid-template-columns: 24px 1fr auto; gap: 9px; align-items: center; width: 100%; height: 22px; text-align: left; }
.menu button svg { justify-self: center; }
.menu button span { grid-column: 2; white-space: nowrap; }
.menu u { text-underline-offset: 2px; }
.menu hr { height: 2px; margin-left: 32px; border: 0; border-top: 1px solid #c0c0c0; }
.menu .hot { outline: 1px solid #e0c27a; outline-offset: -1px; background: linear-gradient(#fbf6d8, #f6e7a4 45%, #efc75c 50%, #f6dd85); }
.sub::after { content: ""; width: 0; height: 0; margin-right: 9px; border: 4px solid transparent; border-left: 4px solid #3f65a8; border-right: 0; }
.menu .split { grid-template-columns: 24px 1fr 1px auto; }
.menu .split::before { content: ""; grid-column: 3; grid-row: 1; height: 14px; background: #b0b4b8; }
.menu .split svg, .menu .split span { grid-row: 1; }
.menu .split::after { grid-column: 4; }

.mini { top: 466px; padding: 1px; }
.mini-row { display: flex; height: 22px; margin-bottom: 2px; }
.mini-row:last-child { margin-bottom: 0; }
.mini-font { width: 74px; }
.mini-size { width: 40px; }
.mini-tools { flex: 1; display: flex; align-items: center; justify-content: space-between; padding: 0 5px; }
.mini-tools button { display: flex; align-items: center; gap: 4px; }

/* Scroll bar */
.scroll { display: flex; flex-direction: column; align-items: stretch; background: #abc5e8; border-left: 1px solid #86a8d6; padding: 1px 0 1px 2px; }
.split-handle { height: 3px; margin: 2px 2px 2px; background: #3d5680; }
.ruler-toggle { display: grid; place-items: center; height: 16px; background: #ccd3dd; border: 1px solid #8c99ad; }
.track { flex: 1; display: flex; flex-direction: column; background: #7896c2; }
.track .plain { height: 18px; }
.track .tri { border-width: 4px 5px 0; border-top-color: #2f4573; }
.track .tri-up { border-width: 0 5px 4px; border-bottom-color: #3d4a64; }
.thumb { flex: 61; display: grid; place-items: center; border: 1px solid #4f6b9c; background: linear-gradient(90deg, #e9edf2, #dfe5ee 40%, #b4c5de); }
.track-rest { flex: 39; }
.thumb i { width: 8px; height: 7px; background: repeating-linear-gradient(#6f7680 0 1px, transparent 1px 2px); }
.jump { height: 17px; }
```
